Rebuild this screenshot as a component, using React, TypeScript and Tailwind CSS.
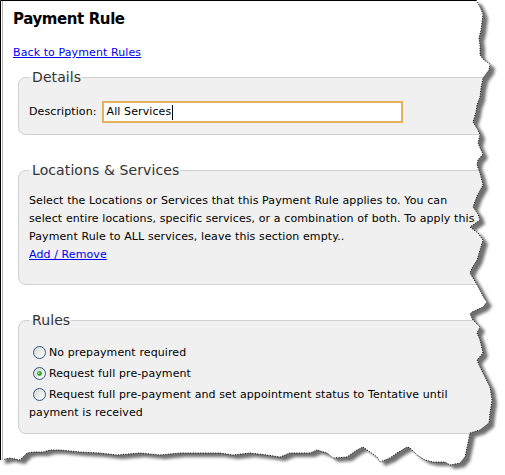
const rightEdge: [number, number][] = [
  [476, 0], [478, 3], [480, 7], [483, 14], [482, 22], [481, 30], [479, 38], [480, 45],
  [480, 55], [484, 60], [490, 64], [489, 70], [483, 78], [481, 88], [480, 97], [477, 105],
  [476, 112], [473, 122], [478, 130], [480, 135], [478, 143], [481, 150], [483, 154],
  [478, 160], [477, 165], [480, 173], [483, 185], [477, 196], [473, 207], [478, 214],
  [480, 220], [470, 227], [478, 233], [483, 240], [480, 250], [477, 260], [472, 268],
  [470, 273], [476, 283], [481, 292], [484, 298], [487, 302], [483, 307], [472, 312],
  [470, 314], [473, 320], [480, 327], [477, 333], [480, 340], [483, 353], [477, 360],
  [480, 367], [485, 377], [490, 387], [492, 400], [490, 413], [489, 423], [480, 430],
  [470, 433], [468, 443], [465, 457], [460, 463],
];

const bottomEdge: [number, number][] = [
  [450, 465], [445, 462], [433, 462], [425, 460], [417, 455], [410, 448], [407, 447],
  [402, 450], [397, 453], [390, 458], [380, 462], [377, 457], [363, 447], [357, 450],
  [347, 457], [333, 458], [327, 453], [317, 450], [310, 453], [300, 453], [290, 453],
  [280, 457], [267, 455], [250, 453], [233, 455], [220, 453], [200, 453], [180, 453],
  [160, 455], [140, 453], [117, 455], [100, 453], [80, 452], [60, 450], [50, 450],
  [43, 452], [33, 452], [27, 453], [20, 460], [10, 458], [0, 460],
];

const torn = [...rightEdge, ...bottomEdge];
const tornLine = "M" + torn.map(([x, y]) => `${x},${y}`).join(" L");
const paper = "M0,0 L" + torn.map(([x, y]) => `${x},${y}`).join(" L") + " Z";
const outside = "M0,0 H505 V475 H0 Z " + paper;

const TornEdge = () => (
  <svg className="pointer-events-none absolute inset-0" width={505} height={475} viewBox="0 0 505 475">
    <defs>
      <clipPath id="outside">
        <path d={outside} clipRule="evenodd" />
      </clipPath>
      <filter id="blur" x="-10%" y="-10%" width="120%" height="120%">
        <feGaussianBlur stdDeviation="1.6" />
      </filter>
    </defs>
    <path d={outside} fill="#fff" fillRule="evenodd" />
    <g clipPath="url(#outside)">
      <path d={paper} transform="translate(5,4)" fill="#707070" filter="url(#blur)" />
    </g>
    <path d={tornLine} fill="none" stroke="#000" strokeWidth={1} strokeDasharray="1 1.5" />
    <path d="M0.5,460 V0.5 H476" fill="none" stroke="#000" strokeWidth={1} />
    <path d="M2.5,460 V1" fill="none" stroke="#b8b8b8" strokeWidth={1} />
  </svg>
);

const Radio = ({ checked = false }: { checked?: boolean }) => (
  <svg width={13} height={13} viewBox="0 0 13 13" className="ml-[4px] mr-[3px] inline-block align-[-3px]">
    <defs>
      <linearGradient id="radioFill" x1="0" y1="0" x2="1" y2="1">
        <stop offset="0" stopColor="#d6d6cf" />
        <stop offset="1" stopColor="#ffffff" />
      </linearGradient>
    </defs>
    <circle cx={6.5} cy={6.5} r={6} fill="url(#radioFill)" stroke="#2a5a8a" strokeWidth={1} />
    {checked && (
      <>
        <circle cx={6.5} cy={6.5} r={2.4} fill="#2ca52c" />
        <circle cx={6} cy={6} r={0.9} fill="#9be39b" />
      </>
    )}
  </svg>
);

const fieldsetCls = "rounded-lg border border-[#d0d0d0] bg-[#f0f0f0] px-[10px]";
const legendCls = "pl-[3px] pr-[1px] text-[14px] leading-[16px] text-[#333]";

export default function App() {
  return (
    <div className="relative h-[475px] w-[505px] overflow-hidden bg-white font-['DejaVu_Sans',sans-serif] text-[11px] leading-[18px] tracking-[0.1px] text-black">
      <div className="pl-[13px] pt-[8px]">
        <h1 className="text-[15px] font-bold leading-[22px] tracking-[-0.4px]">Payment Rule</h1>
        <a href="#" className="mt-[14px] block w-fit text-[#0000ee] underline">
          Back to Payment Rules
        </a>

        <div className="ml-[5px] w-[520px]">
          {/* Details */}
          <fieldset className={`${fieldsetCls} mt-[7px] pb-[11px]`}>
            <legend className={legendCls}>Details</legend>
            <div className="mt-[16px] flex items-center">
              <span>Description:</span>
              <div className="ml-[5px] flex h-[22px] w-[301px] items-center border-2 border-[#e3b25a] bg-white pl-[3px]">
                <span>All Services</span>
                <span className="ml-[1px] h-[15px] w-px bg-black" />
              </div>
            </div>
          </fieldset>

          {/* Locations & Services */}
          <fieldset className={`${fieldsetCls} mt-[27px] pb-[20px]`}>
            <legend className={legendCls}>Locations &amp; Services</legend>
            <p className="mt-[14px] whitespace-nowrap">
              Select the Locations or Services that this Payment Rule applies to. You can
              <br />
              select entire locations, specific services, or a combination of both. To apply this
              <br />
              Payment Rule to ALL services, leave this section empty..
            </p>
            <a href="#" className="block w-fit text-[#0000ee] underline">
              Add / Remove
            </a>
          </fieldset>

          {/* Rules */}
          <fieldset className={`${fieldsetCls} mt-[27px] pb-[11px]`}>
            <legend className={legendCls}>Rules</legend>
            <div className="mt-[13px]">
              <div className="pt-[3px]">
                <Radio />
                No prepayment required
              </div>
              <div className="pt-[3px]">
                <Radio checked />
                Request full pre-payment
              </div>
              <div className="whitespace-nowrap pt-[3px]">
                <Radio />
                Request full pre-payment and set appointment status to Tentative until
                <br />
                payment is received
              </div>
            </div>
          </fieldset>
        </div>
      </div>
      <TornEdge />
    </div>
  );
}
